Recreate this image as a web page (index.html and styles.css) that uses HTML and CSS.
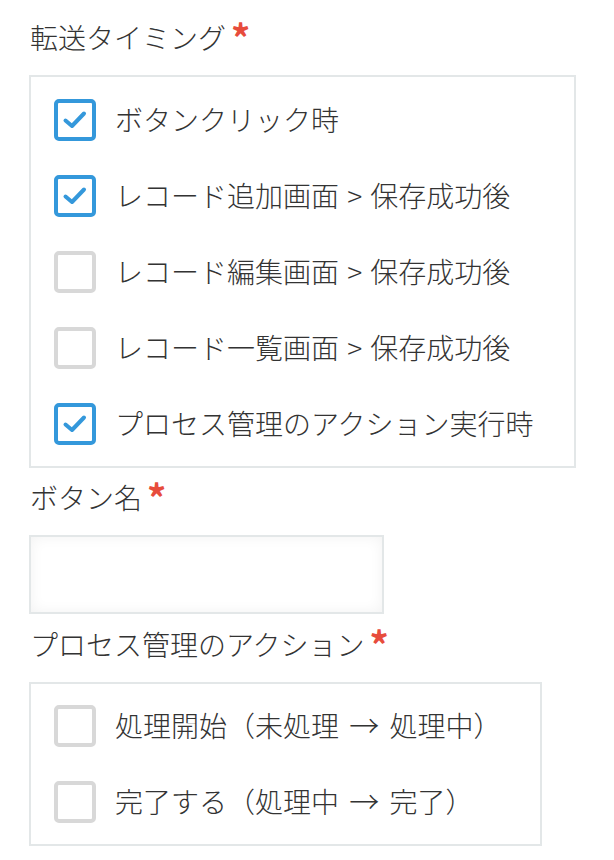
FILE: index.html
```html
<!DOCTYPE html>
<html lang="ja">
<head>
<meta charset="utf-8">
<link rel="stylesheet" href="styles.css">
</head>
<body>
<div class="form">
  <div class="label">転送タイミング<span class="req">*</span></div>
  <div class="box box-timing">
    <div class="row"><span class="cb checked"><svg viewBox="0 0 34 34" width="34" height="34"><polyline points="7.5,17.5 14,23 26,10.5"/></svg></span><span class="text">ボタンクリック時</span></div>
    <div class="row"><span class="cb checked"><svg viewBox="0 0 34 34" width="34" height="34"><polyline points="7.5,17.5 14,23 26,10.5"/></svg></span><span class="text">レコード追加画面 &gt; 保存成功後</span></div>
    <div class="row"><span class="cb"></span><span class="text">レコード編集画面 &gt; 保存成功後</span></div>
    <div class="row"><span class="cb"></span><span class="text">レコード一覧画面 &gt; 保存成功後</span></div>
    <div class="row"><span class="cb checked"><svg viewBox="0 0 34 34" width="34" height="34"><polyline points="7.5,17.5 14,23 26,10.5"/></svg></span><span class="text">プロセス管理のアクション実行時</span></div>
  </div>
  <div class="label after-box">ボタン名<span class="req">*</span></div>
  <div class="input"></div>
  <div class="label after-input">プロセス管理のアクション<span class="req">*</span></div>
  <div class="box box-action">
    <div class="row"><span class="cb"></span><span class="text">処理開始（未処理 <span class="arrow">→</span> 処理中）</span></div>
    <div class="row"><span class="cb"></span><span class="text">完了する（処理中 <span class="arrow">→</span> 完了）</span></div>
  </div>
</div>
</body>
</html>
```
FILE: styles.css
```css
html, body {
  margin: 0;
  background: #fff;
}
body {
  font-family: "Noto Sans CJK JP", "Noto Sans", sans-serif;
  font-weight: 300;
  color: #333;
}
.form {
  padding: 16px 0 0 29px;
}
.label {
  font-size: 28px;
  line-height: 42px;
  height: 42px;
  margin-bottom: 17px;
  padding-left: 1px;
  color: #333;
  white-space: nowrap;
}
.label.after-box {
  margin-top: 8px;
}
.label.after-input {
  margin-top: 9px;
}
.req {
  color: #e74c3c;
  font-weight: bold;
  font-size: 38px;
  line-height: 0;
  margin-left: 5px;
  vertical-align: -4px;
}
.box {
  box-sizing: border-box;
  border: 2px solid #e3e7e8;
  padding: 22px 0 21px 23px;
  display: flex;
  flex-direction: column;
  gap: 34px;
}
.box-timing {
  width: 547px;
}
.box-action {
  width: 513px;
  padding-top: 21px;
}
.row {
  display: flex;
  align-items: center;
  height: 42px;
  gap: 19px;
}
.cb {
  box-sizing: border-box;
  width: 42px;
  height: 42px;
  flex: none;
  border: 4px solid #d8d8d8;
  border-radius: 5px;
  background: #fff;
}
.cb.checked {
  border-color: #3498db;
}
.cb svg {
  display: block;
}
.cb polyline {
  fill: none;
  stroke: #3498db;
  stroke-width: 4;
  stroke-linecap: round;
  stroke-linejoin: round;
}
.text {
  font-size: 28px;
  line-height: 42px;
  color: #333;
  white-space: nowrap;
  word-spacing: 2px;
  margin-top: -2px;
}
.arrow {
  font-size: 30px;
  font-weight: 300;
  line-height: 0;
  margin: 0 2px;
}
.input {
  box-sizing: border-box;
  width: 355px;
  height: 79px;
  border: 2px solid #e3e7e8;
  background: #fff;
  box-shadow: inset 0 0 14px #f2f2f2;
}
```
